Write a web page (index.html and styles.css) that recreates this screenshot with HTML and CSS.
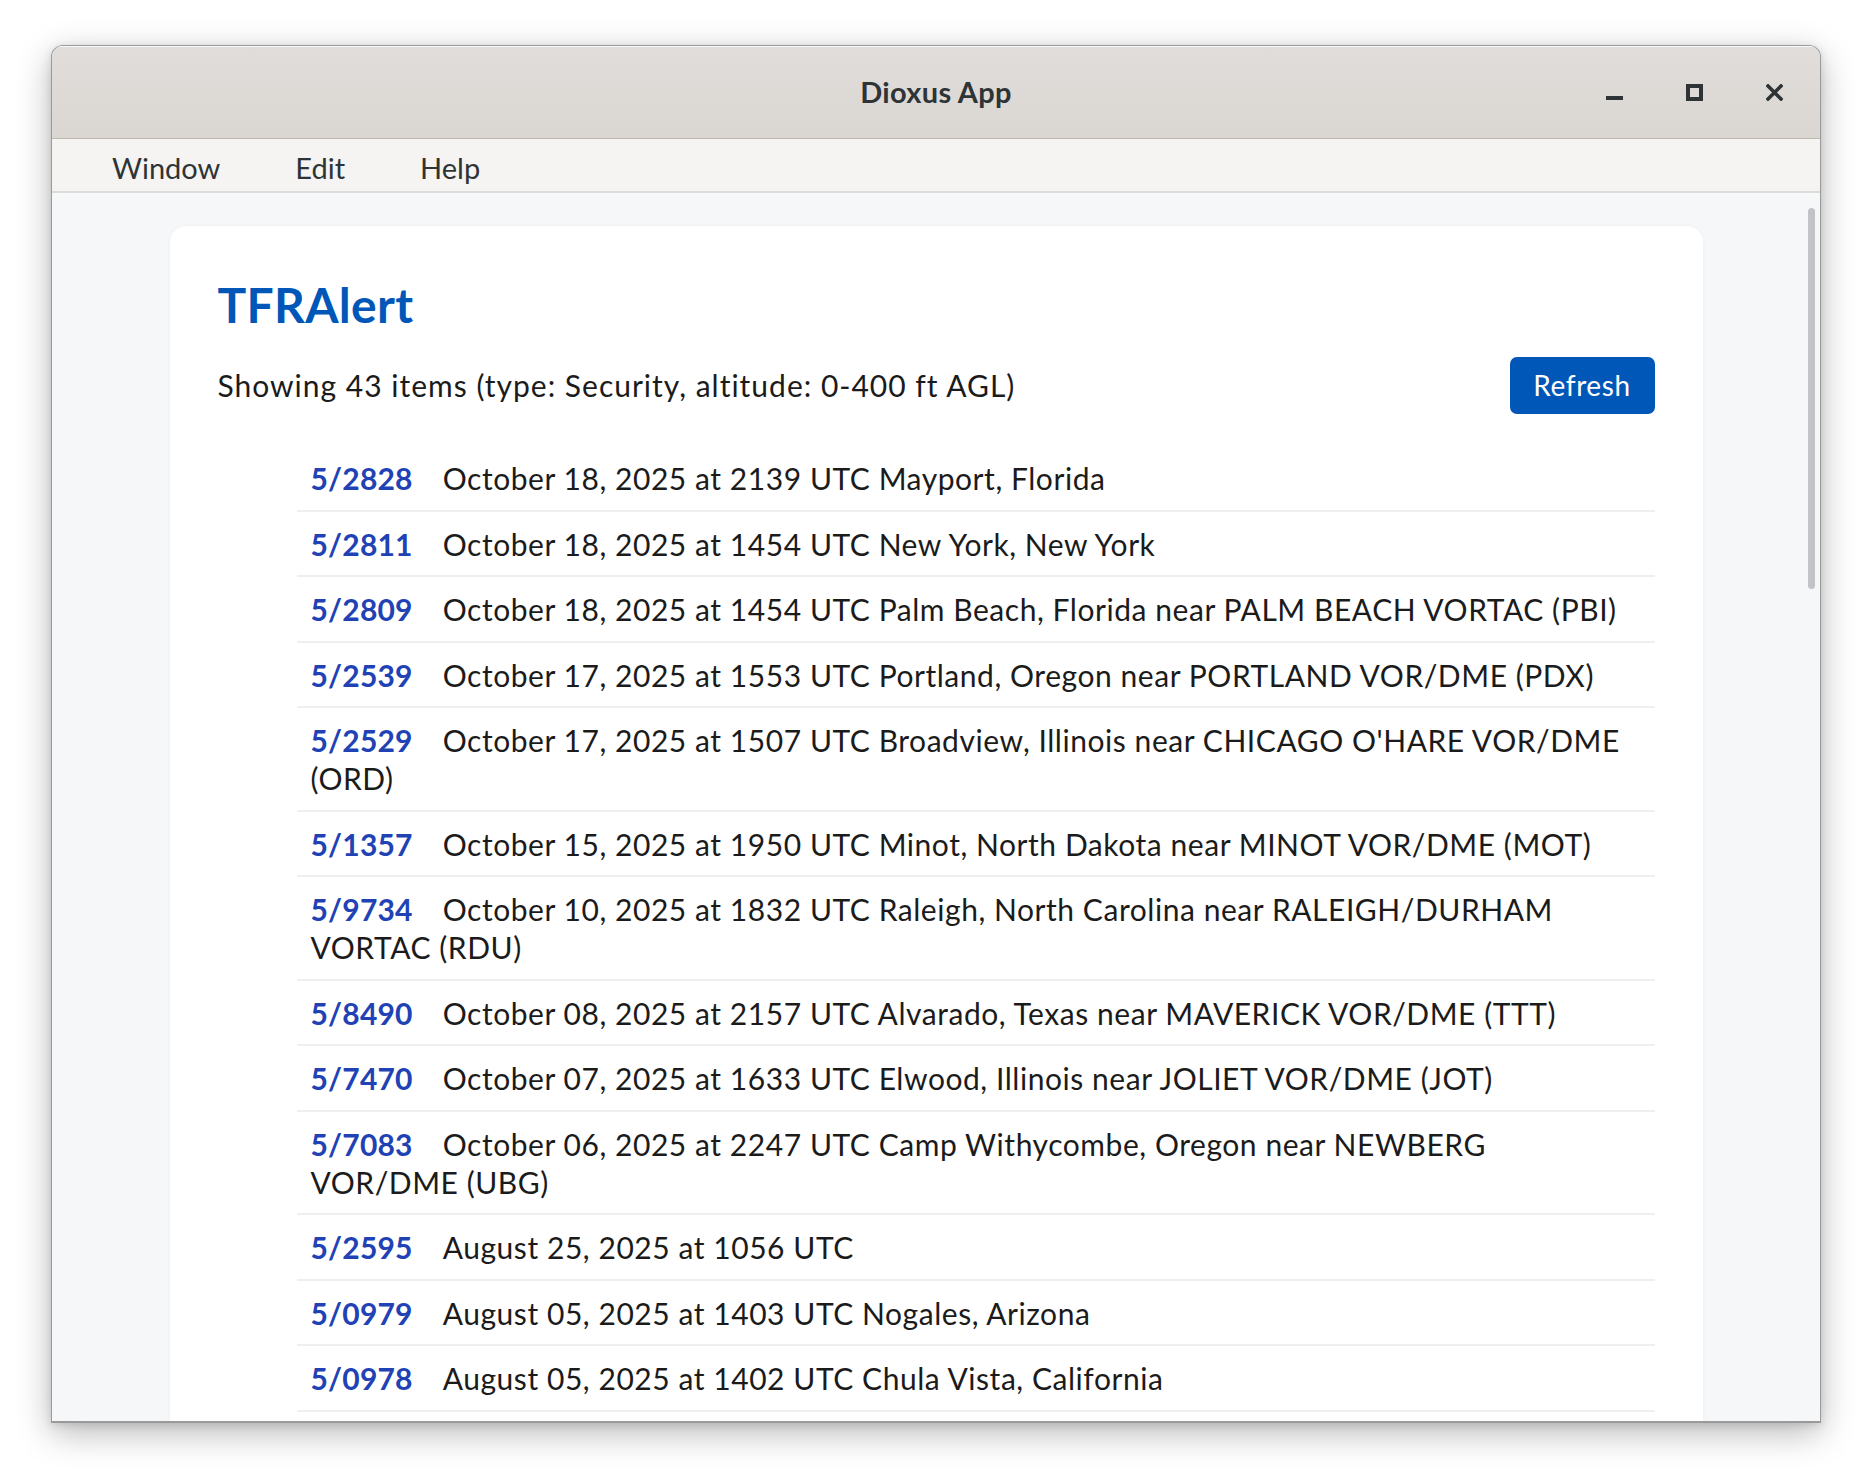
FILE: index.html
```html
<!DOCTYPE html>
<html lang="en">
<head>
<meta charset="utf-8">
<title>Dioxus App</title>
<link rel="stylesheet" href="styles.css">
</head>
<body>
<div class="window">
  <header class="titlebar">
    <div class="tb-spacer"></div>
    <div class="tb-title">Dioxus App</div>
    <div class="tb-controls">
      <span class="tb-btn" aria-label="Minimize">
        <svg width="17" height="17" viewBox="0 0 17 17"><rect x="0" y="12" width="17" height="4" fill="#2e3436"/></svg>
      </span>
      <span class="tb-btn" aria-label="Maximize">
        <svg width="17" height="17" viewBox="0 0 17 17"><rect x="2" y="2" width="13" height="13" fill="none" stroke="#2e3436" stroke-width="4"/></svg>
      </span>
      <span class="tb-btn" aria-label="Close">
        <svg width="17" height="17" viewBox="0 0 17 17"><path d="M2 2 L15 15 M15 2 L2 15" stroke="#2e3436" stroke-width="3.6" stroke-linecap="square"/></svg>
      </span>
    </div>
  </header>
  <nav class="menubar">
    <span class="menu-item">Window</span>
    <span class="menu-item">Edit</span>
    <span class="menu-item">Help</span>
  </nav>
  <main class="content">
    <div class="scrollbar"></div>
    <section class="card">
      <h1 class="app-title">TFRAlert</h1>
      <div class="header-row">
        <p class="summary">Showing 43 items (type: Security, altitude: 0-400 ft AGL)</p>
        <button class="refresh">Refresh</button>
      </div>
      <ul class="tfr-list">
        <li><span class="num">5/2828</span>October 18, 2025 at 2139 UTC Mayport, Florida</li>
        <li><span class="num">5/2811</span>October 18, 2025 at 1454 UTC New York, New York</li>
        <li><span class="num">5/2809</span>October 18, 2025 at 1454 UTC Palm Beach, Florida near PALM BEACH VORTAC (PBI)</li>
        <li><span class="num">5/2539</span>October 17, 2025 at 1553 UTC Portland, Oregon near PORTLAND VOR/DME (PDX)</li>
        <li><span class="num">5/2529</span>October 17, 2025 at 1507 UTC Broadview, Illinois near CHICAGO O'HARE VOR/DME (ORD)</li>
        <li><span class="num">5/1357</span>October 15, 2025 at 1950 UTC Minot, North Dakota near MINOT VOR/DME (MOT)</li>
        <li><span class="num">5/9734</span>October 10, 2025 at 1832 UTC Raleigh, North Carolina near RALEIGH/DURHAM VORTAC (RDU)</li>
        <li><span class="num">5/8490</span>October 08, 2025 at 2157 UTC Alvarado, Texas near MAVERICK VOR/DME (TTT)</li>
        <li><span class="num">5/7470</span>October 07, 2025 at 1633 UTC Elwood, Illinois near JOLIET VOR/DME (JOT)</li>
        <li><span class="num">5/7083</span>October 06, 2025 at 2247 UTC Camp Withycombe, Oregon near NEWBERG VOR/DME (UBG)</li>
        <li><span class="num">5/2595</span>August 25, 2025 at 1056 UTC</li>
        <li><span class="num">5/0979</span>August 05, 2025 at 1403 UTC Nogales, Arizona</li>
        <li><span class="num">5/0978</span>August 05, 2025 at 1402 UTC Chula Vista, California</li>
      </ul>
    </section>
  </main>
</div>
</body>
</html>
```

FILE: styles.css
```css
html, body {
  margin: 0;
  padding: 0;
  background: #ffffff;
}

body {
  width: 1872px;
  height: 1480px;
  overflow: hidden;
  padding: 45px 0 0 51px;
  box-sizing: border-box;
  font-family: "Lato", "Open Sans", sans-serif;
}

.window {
  width: 1770px;
  height: 1378px;
  box-sizing: border-box;
  border: 1px solid #9a9a9a;
  border-bottom-width: 2px;
  border-radius: 12px 12px 0 0;
  display: flex;
  flex-direction: column;
  overflow: hidden;
  box-shadow: 0 10px 34px rgba(0, 0, 0, 0.28), 0 2px 8px rgba(0, 0, 0, 0.12);
  background: #f6f7f9;
}

.titlebar {
  height: 92px;
  flex: none;
  display: grid;
  grid-template-columns: 1fr auto 1fr;
  align-items: center;
  background: linear-gradient(#e1ddda, #dad7d3);
  border-bottom: 1px solid #bfb8b1;
  box-shadow: inset 0 1px 0 rgba(255, 255, 255, 0.85);
  color: #2e3436;
}

.tb-title {
  font-size: 29px;
  font-weight: 700;
  letter-spacing: 0.3px;
  padding-bottom: 2px;
}

.tb-controls {
  justify-self: end;
  display: flex;
  padding-right: 6px;
  height: 100%;
}

.tb-btn {
  width: 80px;
  display: flex;
  align-items: center;
  justify-content: center;
  padding-top: 1px;
}

.menubar {
  height: 54px;
  flex: none;
  display: flex;
  align-items: center;
  gap: 75px;
  padding: 4px 0 0 60px;
  background: #f5f4f2;
  border-bottom: 2px solid #dedcd9;
  color: #2e3436;
  font-size: 29px;
  box-sizing: border-box;
}

.content {
  flex: 1;
  position: relative;
  overflow: hidden;
  background: #f6f7f9;
  padding-top: 33px;
}

.scrollbar {
  position: absolute;
  top: 15px;
  right: 5px;
  width: 7px;
  height: 381px;
  border-radius: 4px;
  background: #c2c3c7;
  z-index: 2;
}

.card {
  width: 1533px;
  margin: 0 auto;
  box-sizing: border-box;
  background: #ffffff;
  border-radius: 16px;
  padding: 50px 48px 48px;
  box-shadow: 0 0 4px rgba(0, 0, 0, 0.04);
}

.app-title {
  margin: 0;
  font-size: 48px;
  line-height: 58px;
  font-weight: 700;
  color: #0057b7;
  letter-spacing: 0.3px;
}

.header-row {
  display: flex;
  justify-content: space-between;
  align-items: center;
  margin-top: 22.5px;
}

.summary {
  margin: 0;
  font-size: 30px;
  letter-spacing: 1px;
  color: #1b1b1b;
}

.refresh {
  height: 57px;
  width: 145px;
  padding: 0;
  border: none;
  border-radius: 7px;
  background: #0057b7;
  color: #ffffff;
  font-family: inherit;
  font-size: 28px;
  letter-spacing: 0.6px;
}

.tfr-list {
  list-style: none;
  margin: 32.5px 0 0 79px;
  padding: 0;
}

.tfr-list li {
  font-size: 30px;
  line-height: 38px;
  padding: 13px 24px 12.5px 14px;
  border-bottom: 2px solid #efefef;
  color: #1b1b1b;
  letter-spacing: 0.55px;
}

.num {
  font-weight: 700;
  color: #2142b5;
  margin-right: 30px;
  letter-spacing: 0.2px;
}
```
